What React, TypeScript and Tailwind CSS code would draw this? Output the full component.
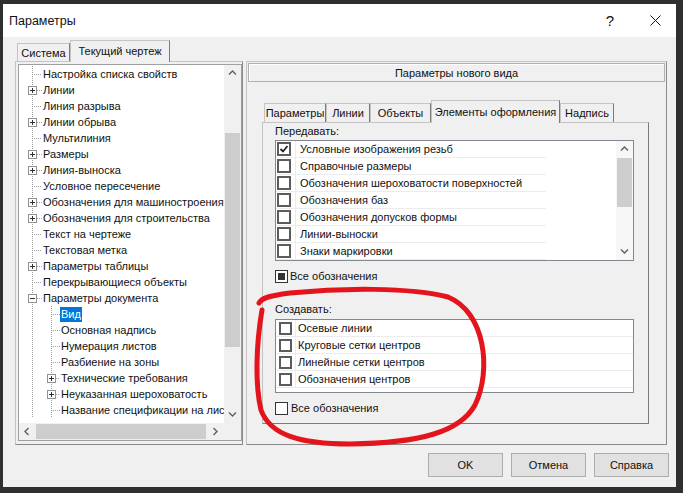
import React from "react";

type TNode = { t: string; l: 0 | 1; e?: "+" | "-"; s?: boolean };

const tree: TNode[] = [
  { t: "Настройка списка свойств", l: 0 },
  { t: "Линии", l: 0, e: "+" },
  { t: "Линия разрыва", l: 0 },
  { t: "Линии обрыва", l: 0, e: "+" },
  { t: "Мультилиния", l: 0 },
  { t: "Размеры", l: 0, e: "+" },
  { t: "Линия-выноска", l: 0, e: "+" },
  { t: "Условное пересечение", l: 0 },
  { t: "Обозначения для машиностроения", l: 0, e: "+" },
  { t: "Обозначения для строительства", l: 0, e: "+" },
  { t: "Текст на чертеже", l: 0 },
  { t: "Текстовая метка", l: 0 },
  { t: "Параметры таблицы", l: 0, e: "+" },
  { t: "Перекрывающиеся объекты", l: 0 },
  { t: "Параметры документа", l: 0, e: "-" },
  { t: "Вид", l: 1, s: true },
  { t: "Основная надпись", l: 1 },
  { t: "Нумерация листов", l: 1 },
  { t: "Разбиение на зоны", l: 1 },
  { t: "Технические требования", l: 1, e: "+" },
  { t: "Неуказанная шероховатость", l: 1, e: "+" },
  { t: "Название спецификации на листе", l: 1 },
];

const DOT = "#a0a0a0";

function Conn({ l, e }: { l: 0 | 1; e?: "+" | "-" }) {
  const w = l === 0 ? 23 : 41;
  const cx = l === 0 ? 13.5 : 32.5;
  return (
    <svg width={w} height={16} className="shrink-0" shapeRendering="crispEdges">
      <line x1={13.5} y1={0} x2={13.5} y2={16} stroke={DOT} strokeDasharray="1 1" />
      {l === 1 && <line x1={32.5} y1={0} x2={32.5} y2={16} stroke={DOT} strokeDasharray="1 1" />}
      <line x1={e ? cx + 4 : cx + 1} y1={8.5} x2={w} y2={8.5} stroke={DOT} strokeDasharray="1 1" />
      {e && (
        <g>
          <rect x={cx - 4} y={4.5} width={8} height={8} fill="white" stroke="#919191" />
          <line x1={cx - 2.5} y1={8.5} x2={cx + 2.5} y2={8.5} stroke="#333" />
          {e === "+" && <line x1={cx} y1={6} x2={cx} y2={11} stroke="#333" />}
        </g>
      )}
    </svg>
  );
}

function Chev({ dir }: { dir: "up" | "down" | "left" | "right" }) {
  const pts =
    dir === "up"
      ? "1,5.5 4.5,2 8,5.5"
      : dir === "down"
      ? "1,2.5 4.5,6 8,2.5"
      : dir === "left"
      ? "5.5,1 2,4.5 5.5,8"
      : "2.5,1 6,4.5 2.5,8";
  return (
    <svg width={9} height={9}>
      <polyline points={pts} fill="none" stroke="#606060" strokeWidth={1.4} />
    </svg>
  );
}

function ListCheck({ checked, size = 14 }: { checked?: boolean; size?: number }) {
  return (
    <div
      className="border-2 border-[#5c5c5c] bg-white flex items-center justify-center shrink-0"
      style={{ width: size, height: size }}
    >
      {checked && (
        <svg width={10} height={10} viewBox="0 0 10 10">
          <polyline points="1.5,5 4,7.5 8.5,2" fill="none" stroke="#222" strokeWidth={1.8} />
        </svg>
      )}
    </div>
  );
}

const list1 = [
  "Условные изображения резьб",
  "Справочные размеры",
  "Обозначения шероховатости поверхностей",
  "Обозначения баз",
  "Обозначения допусков формы",
  "Линии-выноски",
  "Знаки маркировки",
];

const list2 = [
  "Осевые линии",
  "Круговые сетки центров",
  "Линейные сетки центров",
  "Обозначения центров",
];

function Tab({ label, w, selected }: { label: string; w: number; selected?: boolean }) {
  if (selected) {
    return (
      <div
        className="relative z-10 h-[23px] -mb-[1px] bg-[#f0f0f0] border border-b-0 border-[#c4c4c4] border-r-[#7a7a7a] flex items-start pt-[3px] justify-center whitespace-nowrap"
        style={{ width: w }}
      >
        {label}
      </div>
    );
  }
  return (
    <div
      className="h-[19px] bg-[#f0f0f0] border border-b-0 border-[#c4c4c4] border-r-[#7a7a7a] flex items-center justify-center whitespace-nowrap"
      style={{ width: w }}
    >
      {label}
    </div>
  );
}

export default function App() {
  return (
    <div className="relative w-[683px] h-[493px] bg-[#2f2f2f] pt-[4px] pl-[3px] font-['Liberation_Sans',Arial,sans-serif] text-[11px] leading-[16px] text-[#111] overflow-hidden">
      <div className="w-[673px] h-[483px] bg-[#f0f0f0] flex flex-col">
        {/* Title bar */}
        <div className="h-[33px] bg-white flex items-center shrink-0">
          <span className="ml-[6px] text-[12.5px]">Параметры</span>
          <span className="ml-auto w-[10px] text-center text-[15px] leading-[16px]">?</span>
          <svg width={11} height={11} className="ml-[35px] mr-[15px]">
            <line x1={0.5} y1={0.5} x2={10.5} y2={10.5} stroke="#111" strokeWidth={1} />
            <line x1={10.5} y1={0.5} x2={0.5} y2={10.5} stroke="#111" strokeWidth={1} />
          </svg>
        </div>

        {/* Top tabs */}
        <div className="mt-[3px] h-[21px] flex items-end pl-[14px] shrink-0">
          <div className="h-[18px] w-[53px] border border-b-0 border-[#c4c4c4] border-r-[#7a7a7a] flex items-center justify-center">
            Система
          </div>
          <div className="relative z-10 h-[22px] -mb-[1px] w-[100px] bg-[#f0f0f0] border border-b-0 border-[#c4c4c4] border-r-[#7a7a7a] flex items-start pt-[2px] justify-center whitespace-nowrap">
            Текущий чертеж
          </div>
        </div>

        {/* Content */}
        <div className="flex h-[384px] shrink-0">
          {/* Left panel */}
          <div className="ml-[12px] w-[228px] h-full border border-[#c4c4c4] border-r-[#8a8a8a] border-b-[#8a8a8a] pt-[2px] pl-[2px]">
            <div className="w-[224px] h-[377px] border border-[#a0a0a0] bg-white grid grid-cols-[205px_17px] grid-rows-[358px_17px]">
              <div className="overflow-hidden pt-[1px]">
                {tree.map((n, i) => (
                  <div key={i} className="flex h-[16px] items-center whitespace-nowrap">
                    <Conn l={n.l} e={n.e} />
                    <span
                      className={
                        n.s
                          ? "px-[1px] bg-[#0078d7] text-white leading-[15px]"
                          : "px-[1px] leading-[16px]"
                      }
                    >
                      {n.t}
                    </span>
                  </div>
                ))}
              </div>
              {/* vertical scrollbar */}
              <div className="flex flex-col bg-[#f0f0f0]">
                <div className="h-[17px] flex items-center justify-center">
                  <Chev dir="up" />
                </div>
                <div className="h-[51px]" />
                <div className="h-[214px] mx-[1px] bg-[#cdcdcd]" />
                <div className="flex-1" />
                <div className="h-[17px] flex items-center justify-center">
                  <Chev dir="down" />
                </div>
              </div>
              {/* horizontal scrollbar */}
              <div className="flex bg-[#f0f0f0]">
                <div className="w-[17px] flex items-center justify-center">
                  <Chev dir="left" />
                </div>
                <div className="w-[170px] my-[1px] bg-[#cdcdcd]" />
                <div className="flex-1" />
                <div className="w-[17px] flex items-center justify-center">
                  <Chev dir="right" />
                </div>
              </div>
              <div className="bg-[#f0f0f0]" />
            </div>
          </div>

          {/* Right panel */}
          <div className="ml-[3px] w-[421px] h-full border border-[#c4c4c4] border-r-[#8a8a8a] border-b-[#8a8a8a] flex flex-col">
            <div className="mx-[1px] mt-[1px] h-[19px] border border-[#b0b0b0] shadow-[inset_1px_1px_0_#ffffff] flex items-center justify-center">
              Параметры нового вида
            </div>

            <div className="ml-[15px] mt-[18px] flex flex-col">
              <div className="flex items-end pl-[2px] h-[22px]">
                <Tab label="Параметры" w={62} />
                <Tab label="Линии" w={44} />
                <Tab label="Объекты" w={61} />
                <Tab label="Элементы оформления" w={129} selected />
                <Tab label="Надпись" w={54} />
              </div>
              <div className="w-[387px] h-[302px] border border-[#c4c4c4] border-r-[#7a7a7a] border-b-[#7a7a7a] pl-[12px]">
                <div className="h-[16px]">Передавать:</div>
                <div className="mt-[1px] w-[359px] h-[121px] border border-[#828790] bg-white flex">
                  <div className="flex flex-col">
                    {list1.map((t, i) => (
                      <div key={i} className="flex h-[17px] border-b border-[#ececec]">
                        <div className="w-[20px] border-r border-[#ececec] flex items-center pl-[1px]">
                          <ListCheck checked={i === 0} />
                        </div>
                        <div className="w-[250px] pl-[4px] flex items-center whitespace-nowrap">{t}</div>
                      </div>
                    ))}
                  </div>
                  <div className="ml-auto w-[17px] flex flex-col bg-[#f7f7f7]">
                    <div className="h-[17px] flex items-center justify-center">
                      <Chev dir="up" />
                    </div>
                    <div className="h-[49px] mx-[1px] bg-[#cdcdcd]" />
                    <div className="flex-1" />
                    <div className="h-[17px] flex items-center justify-center">
                      <Chev dir="down" />
                    </div>
                  </div>
                </div>

                <div className="mt-[8px] h-[14px] flex items-center">
                  <div className="w-[13px] h-[13px] border border-[#333] bg-white p-[2px]">
                    <div className="w-full h-full bg-[#333]" />
                  </div>
                  <span className="ml-[2px] leading-[14px]">Все обозначения</span>
                </div>

                <div className="mt-[18px] h-[16px]">Создавать:</div>
                <div className="mt-[2px] w-[359px] h-[74px] border border-[#828790] bg-white flex flex-col">
                  {list2.map((t, i) => (
                    <div key={i} className="flex h-[17px] border-b border-[#ececec]">
                      <div className="w-[20px] border-r border-[#ececec] flex items-center pl-[3px]">
                        <ListCheck size={13} />
                      </div>
                      <div className="w-[250px] pl-[2px] flex items-center whitespace-nowrap">{t}</div>
                    </div>
                  ))}
                </div>

                <div className="mt-[8px] h-[14px] flex items-center">
                  <div className="w-[13px] h-[13px] border border-[#333] bg-white" />
                  <span className="ml-[3px] leading-[14px]">Все обозначения</span>
                </div>
              </div>
            </div>
          </div>
        </div>

        {/* Buttons */}
        <div className="mt-[8px] h-[24px] flex justify-end gap-[8px] pr-[7px] shrink-0">
          {["OK", "Отмена", "Справка"].map((b) => (
            <div
              key={b}
              className="w-[75px] h-[24px] bg-[#e1e1e1] border border-[#adadad] flex items-center justify-center"
            >
              {b}
            </div>
          ))}
        </div>
      </div>

      {/* Red hand-drawn circle overlay */}
      <svg
        className="absolute left-0 top-0 pointer-events-none"
        width={683}
        height={493}
        viewBox="0 0 683 493"
      >
        <path
          d="M 259 303 C 262 298, 268 296, 290 293 C 340 288, 410 287, 448 297 C 485 312, 492 370, 475 405 C 460 432, 420 443, 350 444 C 300 444, 270 435, 261 410 C 255 385, 256 345, 262 310"
          fill="none"
          stroke="#e3141b"
          strokeWidth={5}
          strokeLinecap="round"
          strokeLinejoin="round"
        />
      </svg>
    </div>
  );
}
